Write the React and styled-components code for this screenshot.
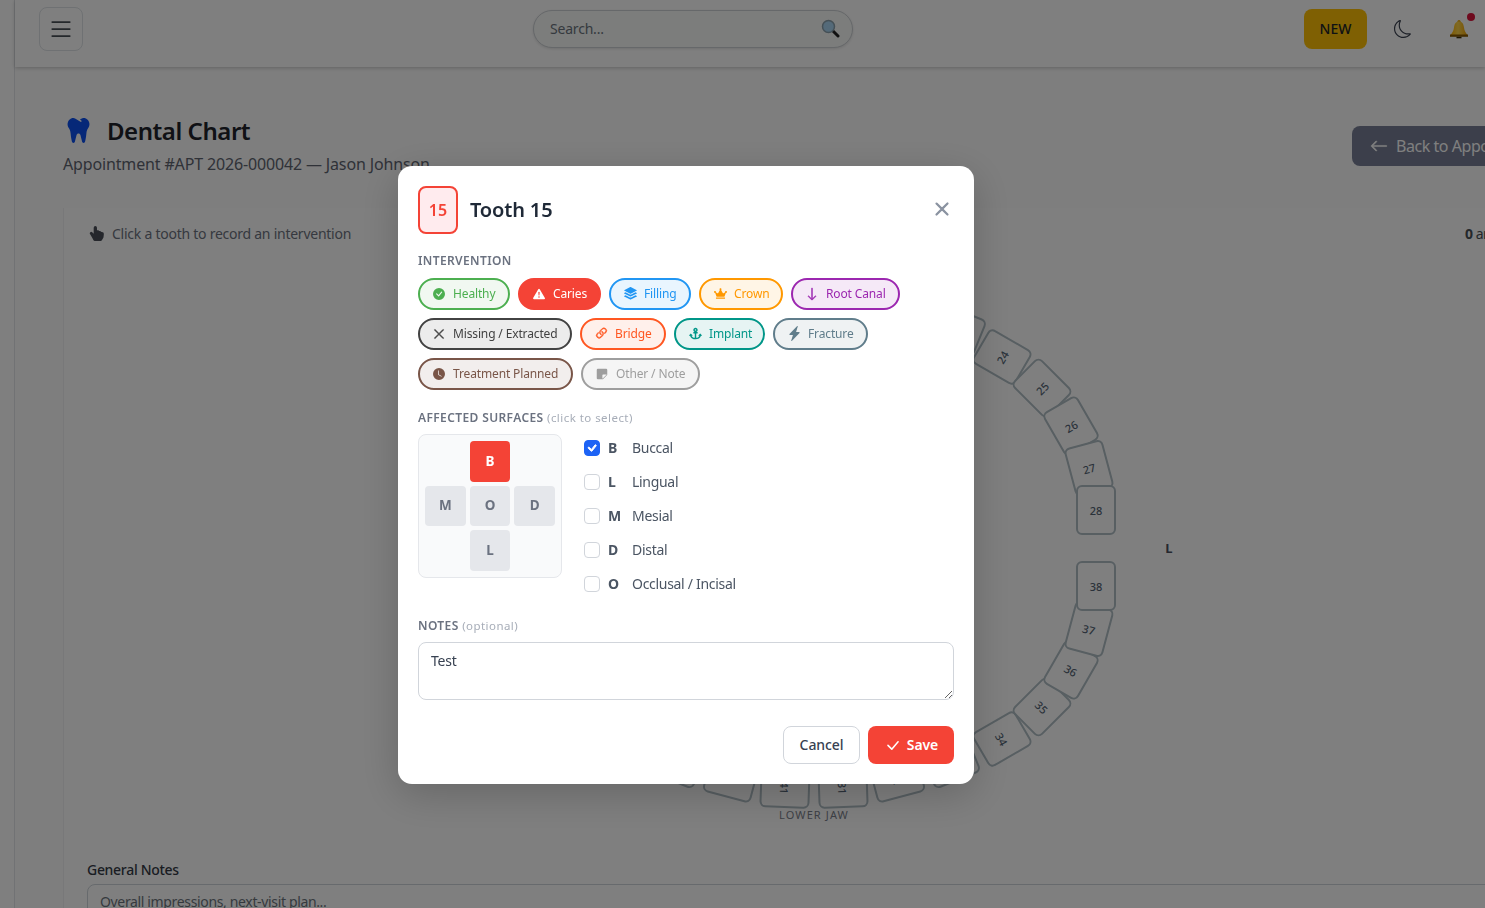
import React from "react";
import styled, { createGlobalStyle } from "styled-components";
import {
  BsCheckCircleFill, BsExclamationTriangleFill, BsStack, BsArrowDown, BsXLg, BsLink45Deg,
  BsLightningChargeFill, BsClockFill, BsStickyFill, BsHandIndexThumbFill, BsArrowLeft, BsList,
  BsMoon, BsCheckLg, BsCheck,
} from "react-icons/bs";
import { FaCrown, FaAnchor, FaTooth } from "react-icons/fa";

const FONT = `"Noto Sans", "Open Sans", sans-serif`;

const Global = createGlobalStyle`
  html, body { margin: 0; padding: 0; height: 100%; overflow: hidden; background: #fff; }
  body { font-family: ${FONT}; color: #212529; }
  * { box-sizing: border-box; }
`;

const Shell = styled.div`display: flex; width: 1485px; height: 908px; overflow: hidden; background: #fff;`;
const Rail = styled.aside`flex: 0 0 15px; border-right: 1px solid #e2e4e8; background: #fff;`;
const Main = styled.div`flex: 1; min-width: 0; display: flex; flex-direction: column;`;

const Header = styled.header`
  flex: 0 0 67px; display: flex; align-items: center; padding: 0 0 9px 24px; background: #fff;
  box-shadow: 0 1px 4px rgba(0,0,0,.22); position: relative; z-index: 1;
`;
const MenuButton = styled.button`
  width: 44px; height: 44px; display: flex; align-items: center; justify-content: center; padding: 0;
  background: transparent; border: 1px solid #dee2e6; border-radius: 8px; color: #495057; font-size: 28px;
`;
const Search = styled.div`
  width: 320px; height: 38px; margin-left: 450px; padding: 0 12px 1px 16px; border-radius: 19px; display: flex; align-items: center; justify-content: space-between;
  background: #f8faf9; border: 1px solid #ccd0d4; box-shadow: 0 1px 3px rgba(0,0,0,.12); font-size: 14px; letter-spacing: -.2px; color: #6c757d;
`;
const Actions = styled.div`margin-left: auto; display: flex; align-items: center;`;
const NewButton = styled.button`
  width: 63px; height: 40px; border: 0; border-radius: 8px; background: #ffc107; color: #212529; font: 500 14px ${FONT}; padding: 0 0 1px;
`;
const MoonWrap = styled.span`display: flex; width: 18px; margin-left: 27px; font-size: 18px; color: #3a4150;`;
const BellWrap = styled.span`display: flex; position: relative; width: 26px; height: 22px; margin: 2px 10px 0 37px;`;
const Dot = styled.i`position: absolute; top: -6px; left: 18px; width: 8px; height: 8px; border-radius: 50%; background: #dc143c;`;

const Content = styled.main`flex: 1; background: #fcfcfc; padding: 43px 0 0 48px; min-width: 0;`;
const TitleRow = styled.div`display: flex; align-items: flex-start; width: 1480px; justify-content: space-between;`;
const TitleBlock = styled.div`display: flex; flex-direction: column;`;
const Title = styled.h1`
  margin: 0; display: flex; align-items: center; gap: 16px; height: 42px; padding: 0 0 2px 3px; font: 600 24px ${FONT}; letter-spacing: -.45px; color: #20232b;
  svg { color: #0d50f0; font-size: 25px; }
`;
const Sub = styled.p`margin: 0; font-size: 16px; line-height: 24px; letter-spacing: -.15px; color: #5f6470;`;
const BackButton = styled.button`
  margin-top: 16px; width: 191px; height: 40px; border: 0; border-radius: 8px 0 0 8px; background: #787f96; color: #fff; display: flex; align-items: center; gap: 8px; padding: 0 0 0 18px; font: 400 16px ${FONT}; letter-spacing: -.45px; white-space: nowrap; flex: none;
  svg { flex: none; font-size: 18px; stroke: currentColor; stroke-width: .5; }
`;
const Card = styled.section`
  margin-top: 32px; width: 1480px; padding: 13px 24px 0 23px; background: #fff; border-left: 1px solid #f0f0f2; height: 700px;
`;
const CardTop = styled.div`display: flex; align-items: center; justify-content: space-between; height: 24px; font-size: 14px; letter-spacing: -.25px; color: #6c7280;`;
const Hint = styled.span`display: flex; align-items: center; gap: 8px; svg { font-size: 15px; margin-left: 2px; color: #4a4f59; }`;
const Count = styled.span`width: 54px; white-space: nowrap; letter-spacing: -.5px; color: #495057; b { font-weight: 700; }`;
const Chart = styled.div`position: relative; height: 600px; margin-top: -5px;`;
const Tooth = styled.div`
  position: absolute; width: 40px; height: 50px; margin: -25px 0 0 -20px; display: flex; align-items: center; justify-content: center;
  background: #fff; border: 2px solid #b0bec5; border-radius: 6px; font-size: 11px; font-weight: 500; color: #556575;
`;
const JawLabel = styled.span`position: absolute; font-size: 11px; letter-spacing: 1.1px; color: #7b818c; transform: translateX(-50%);`;
const SideLabel = styled.span`position: absolute; font-size: 13px; font-weight: 700; color: #4a5060; transform: translate(-50%, -50%);`;
const GeneralLabel = styled.label`display: block; margin-top: 20px; font-size: 14px; font-weight: 500; letter-spacing: -.3px; line-height: 20px; color: #343a46;`;
const GeneralInput = styled.div`margin-top: 4px; height: 60px; padding: 7px 12px; border: 1px solid #ced4da; border-radius: 8px; font-size: 14px; letter-spacing: -.35px; color: #6c757d;`;

const Overlay = styled.div`
  position: fixed; inset: 0; z-index: 10; background: rgba(0,0,0,.5); display: flex; align-items: center; justify-content: center; padding: 42px 113px 0 0;
`;
const Modal = styled.div`width: 576px; height: 618px; padding: 20px; background: #fff; border-radius: 14px; box-shadow: 0 10px 40px rgba(0,0,0,.2);`;
const ModalHead = styled.div`display: flex; align-items: center; gap: 12px; height: 48px;`;
const Badge = styled.div`
  width: 40px; height: 48px; display: flex; align-items: center; justify-content: center; border: 2px solid #f44336; border-radius: 8px; background: #ffebee; color: #f44336; font-size: 16px; font-weight: 600;
`;
const ModalTitle = styled.h2`margin: 0 0 2px; flex: 1; font-size: 20px; font-weight: 600; letter-spacing: -.15px; color: #1f2937;`;
const Close = styled.button`
  border: 0; background: none; padding: 0; margin: 0 4px 2px 0; display: flex; color: #8b93a1; font-size: 16px;
  svg { stroke: currentColor; stroke-width: 1.2; }
`;
const Label = styled.div`
  font-size: 12px; line-height: 18px; font-weight: 600; letter-spacing: .38px; color: #6b7280; margin-top: ${p => p.$top}px; margin-bottom: ${p => p.$bottom}px;
  small { font-size: 11.5px; font-weight: 400; color: #a7adb8; letter-spacing: .45px; }
`;
const Pills = styled.div`display: flex; flex-wrap: wrap; gap: 8px; width: 520px;`;
const Pill = styled.button`
  height: 32px; width: ${p => p.$w}px; padding: 0 0 2px 12px; display: flex; align-items: center; gap: 7px; border: 2px solid ${p => p.$c}; border-radius: 20px;
  background: ${p => p.$on ? p.$c : p.$bg}; color: ${p => p.$on ? "#fff" : p.$c}; font: 400 12px ${FONT}; letter-spacing: -.14px; white-space: nowrap;
`;
const PillIcon = styled.span`
  flex: 0 0 14px; min-width: 0; height: 14px; margin-top: 1px; display: flex; align-items: center; justify-content: center; font-size: ${p => p.$s || 12}px;
  svg { flex: none; stroke: currentColor; stroke-width: ${p => p.$w || 0}; }
`;
const Surfaces = styled.div`display: flex; gap: 22px;`;
const Diagram = styled.div`
  width: 144px; height: 144px; padding: 6px; border: 1px solid #e5e7eb; border-radius: 8px; background: #f9fafb;
  display: grid; grid-template-columns: repeat(3, 1fr); grid-template-rows: repeat(3, 1fr); gap: 4px;
`;
const Cell = styled.button`
  grid-column: ${p => p.$col}; grid-row: ${p => p.$row}; border: 0; padding: 0 0 1px; border-radius: 4px; background: ${p => p.$on ? "#f44336" : "#e5e7eb"}; color: ${p => p.$on ? "#fff" : "#6b7280"}; font: 700 13.5px ${FONT};
`;
const Checks = styled.div`display: flex; flex-direction: column; gap: 8px; padding-top: 1px;`;
const CheckRow = styled.label`display: flex; align-items: center; height: 26px; font-size: 14px; letter-spacing: -.3px; color: #4b5563;`;
const Box = styled.span`
  width: 16px; height: 16px; margin-right: 8px; border-radius: 4px; display: flex; align-items: center; justify-content: center; font-size: 16px; color: #fff;
  border: 1px solid ${p => p.$on ? "#1d63f5" : "#d1d5db"}; background: ${p => p.$on ? "#1d63f5" : "#fff"};
  svg { flex: none; stroke: currentColor; stroke-width: .9; }
`;
const Code = styled.b`width: 24px; font-size: 14px; font-weight: 700; letter-spacing: 0; padding-bottom: 2px;`;
const Name = styled.span`padding-bottom: 2px;`;
const Notes = styled.textarea`
  display: block; width: 100%; height: 58px; padding: 8px 12px; border: 1px solid #d1d5db; border-radius: 8px; font: 400 14px/20px ${FONT}; letter-spacing: -.2px; color: #374151; outline: 0; resize: vertical;
`;
const Footer = styled.div`display: flex; justify-content: flex-end; gap: 8px; margin-top: 26px;`;
const Cancel = styled.button`width: 77px; height: 38px; padding: 0 0 2px; background: #fff; border: 1px solid #d1d5db; border-radius: 8px; color: #374151; font: 500 14px ${FONT}; letter-spacing: -.1px;`;
const Save = styled.button`
  width: 86px; height: 38px; padding: 0 0 2px; background: #f44336; border: 0; border-radius: 8px; color: #fff; font: 600 14px ${FONT}; letter-spacing: -.1px; display: flex; align-items: center; justify-content: center; gap: 6px;
  svg { font-size: 17px; margin-top: 2px; }
`;

const CX = 727, CY = 308;
const upper = [[21,29,-240,-88],[22,87,-233,-76],[23,143,-218,-68],[24,188,-191,-60],[25,228,-160,-45],[26,257,-122,-30],[27,275,-80,-15],[28,282,-38,0]];
const lower = [[31,29,240,88],[32,83,230,75],[33,137,214,68],[34,188,191,60],[35,228,159,45],[36,257,122,30],[37,275,81,15],[38,282,38,0]];
const teeth = [
  ...upper.map(([n,x,y,r]) => [n-10,-x,y,-180-r]).reverse(),
  ...upper,
  ...lower.map(([n,x,y,r]) => [n+10,-x,y,180-r]).reverse(),
  ...lower,
];

const PILLS = [
  ["Healthy", BsCheckCircleFill, "#4caf50", "#f1f8f1", 92],
  ["Caries", BsExclamationTriangleFill, "#f44336", "#fff", 83, true],
  ["Filling", BsStack, "#2196f3", "#e9f5fe", 82, false, 13],
  ["Crown", FaCrown, "#ff9800", "#fff5e6", 84, false, 13],
  ["Root Canal", BsArrowDown, "#9c27b0", "#f5e9f7", 109, false, 14, .6],
  ["Missing / Extracted", BsXLg, "#424242", "#ececec", 154, false, 12, 1],
  ["Bridge", BsLink45Deg, "#ff5722", "#fff0eb", 86, false, 15, .5],
  ["Implant", FaAnchor, "#009688", "#e6f4f3", 91, false, 13],
  ["Fracture", BsLightningChargeFill, "#607d8b", "#eff2f3", 95, false, 15],
  ["Treatment Planned", BsClockFill, "#795548", "#f2eeed", 155],
  ["Other / Note", BsStickyFill, "#9e9e9e", "#f5f5f5", 119],
];
const CHECKS = [["B","Buccal",true],["L","Lingual"],["M","Mesial"],["D","Distal"],["O","Occlusal / Incisal"]];

const Bell = () => (
  <svg width="20" height="22" viewBox="0 0 20 22">
    <defs><linearGradient id="bg" x1="0" x2="1"><stop offset="0" stopColor="#ffb300"/><stop offset=".45" stopColor="#ffd54a"/><stop offset="1" stopColor="#f0a000"/></linearGradient></defs>
    <circle cx="10" cy="2.6" r="1.6" fill="#e8a500"/>
    <path d="M10 2.5c-3.4 0-4.6 2.6-5 6-.4 3-1.5 5.300-3.500 7.500h17c-2-2.200-3.100-4.500-3.500-7.500-.4-3.400-1.600-6-5-6z" fill="url(#bg)"/>
    <path d="M1 15.500h18v2.300H1z" fill="#8a5b00"/>
    <path d="M7.500 17.800h5v1.500h-5z" fill="#3a2a00"/>
  </svg>
);
const Lens = () => (
  <svg width="19" height="19" viewBox="0 0 19 19">
    <path d="M11.500 11.500l5.500 5.500" stroke="#222" strokeWidth="3" strokeLinecap="round"/>
    <circle cx="7.500" cy="7.500" r="6" fill="#a8d4f2" stroke="#8aa0ac" strokeWidth="1.500"/>
  </svg>
);

export default function App() {
  return (
    <>
      <Global />
      <Shell>
        <Rail />
        <Main>
          <Header>
            <MenuButton><BsList /></MenuButton>
            <Search>Search...<Lens /></Search>
            <Actions>
              <NewButton>NEW</NewButton>
              <MoonWrap><BsMoon /></MoonWrap>
              <BellWrap><Bell /><Dot /></BellWrap>
            </Actions>
          </Header>
          <Content>
            <TitleRow>
              <TitleBlock>
                <Title><FaTooth />Dental Chart</Title>
                <Sub>Appointment #APT 2026-000042 — Jason Johnson</Sub>
              </TitleBlock>
              <BackButton><BsArrowLeft />Back to Appointment</BackButton>
            </TitleRow>
            <Card>
              <CardTop>
                <Hint><BsHandIndexThumbFill />Click a tooth to record an intervention</Hint>
                <Count><b>0</b> areas recorded</Count>
              </CardTop>
              <Chart>
                {teeth.map(([n, x, y, r]) => (
                  <Tooth key={n} style={{ left: CX + x, top: CY + y, transform: `rotate(${r}deg)` }}>{n}</Tooth>
                ))}
                <JawLabel style={{ left: CX, top: CY - 268 }}>UPPER JAW</JawLabel>
                <JawLabel style={{ left: CX, top: CY + 259 }}>LOWER JAW</JawLabel>
                <SideLabel style={{ left: CX + 355, top: CY }}>L</SideLabel>
                <SideLabel style={{ left: CX - 355, top: CY }}>R</SideLabel>
              </Chart>
              <GeneralLabel>General Notes</GeneralLabel>
              <GeneralInput>Overall impressions, next-visit plan...</GeneralInput>
            </Card>
          </Content>
        </Main>
      </Shell>
      <Overlay>
        <Modal>
          <ModalHead>
            <Badge>15</Badge>
            <ModalTitle>Tooth 15</ModalTitle>
            <Close><BsXLg /></Close>
          </ModalHead>
          <Label $top={18} $bottom={8}>INTERVENTION</Label>
          <Pills>
            {PILLS.map(([t, I, c, bg, w, on, s, sw]) => (
              <Pill key={t} $c={c} $bg={bg} $w={w} $on={on}><PillIcon $s={s} $w={sw}><I /></PillIcon>{t}</Pill>
            ))}
          </Pills>
          <Label $top={19} $bottom={7}>AFFECTED SURFACES <small>(click to select)</small></Label>
          <Surfaces>
            <Diagram>
              <Cell $col={2} $row={1} $on>B</Cell>
              <Cell $col={1} $row={2}>M</Cell>
              <Cell $col={2} $row={2}>O</Cell>
              <Cell $col={3} $row={2}>D</Cell>
              <Cell $col={2} $row={3}>L</Cell>
            </Diagram>
            <Checks>
              {CHECKS.map(([k, t, on]) => (
                <CheckRow key={k}><Box $on={on}>{on && <BsCheck />}</Box><Code>{k}</Code><Name>{t}</Name></CheckRow>
              ))}
            </Checks>
          </Surfaces>
          <Label $top={20} $bottom={7}>NOTES <small>(optional)</small></Label>
          <Notes defaultValue="Test" />
          <Footer>
            <Cancel>Cancel</Cancel>
            <Save><BsCheckLg />Save</Save>
          </Footer>
        </Modal>
      </Overlay>
    </>
  );
}
